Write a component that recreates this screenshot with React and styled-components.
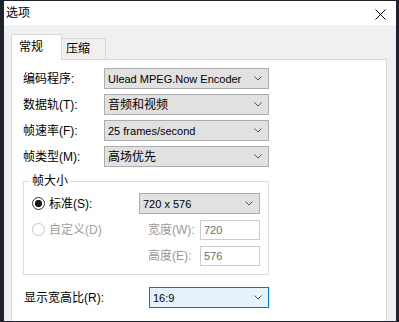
import styled, { createGlobalStyle } from "styled-components";

const GlobalStyle = createGlobalStyle`
  html, body {
    margin: 0;
    padding: 0;
    background: #1d222b;
  }
  body {
    width: 399px;
    height: 322px;
    overflow: hidden;
    font-family: "Liberation Sans", "Noto Sans CJK SC", sans-serif;
    color: #000;
  }
`;

const Page = styled.div`
  padding: 1px 0 0 4px;
  height: 321px;
  box-sizing: border-box;
`;

const Window = styled.div`
  width: 392px;
  height: 100%;
  display: flex;
  flex-direction: column;
  background: #f0f0f0;
`;

const TitleBar = styled.div`
  height: 24px;
  background: #fff;
  display: flex;
  align-items: center;
  justify-content: space-between;
  padding: 0 6px 0 2px;
`;

const Title = styled.span`
  font-size: 12px;
  line-height: 14px;
`;

const Close = styled.svg`
  width: 11px;
  height: 11px;
  margin-right: 4px;
  margin-top: 2px;
`;

const Body = styled.div`
  flex: 1;
  display: flex;
  flex-direction: column;
  padding: 9px 9px 0 7px;
`;

const TabStrip = styled.div`
  display: flex;
  align-items: flex-end;
  height: 26px;
  margin-bottom: -1px;
  position: relative;
  z-index: 1;
`;

const Tab = styled.div`
  box-sizing: border-box;
  display: flex;
  align-items: center;
  font-size: 12px;
  line-height: 14px;
  border: 1px solid #d9d9d9;
  ${(p) =>
    p.$active
      ? `
    width: 51px;
    height: 26px;
    background: #fff;
    border-bottom: none;
    padding: 0 0 2px 7px;
  `
      : `
    width: 44px;
    height: 22px;
    background: #f0f0f0;
    border-left: none;
    padding: 0 0 0 4px;
  `}
`;

const Panel = styled.div`
  flex: 1;
  width: 376px;
  box-sizing: border-box;
  background: #fff;
  border: 1px solid #d9d9d9;
  border-bottom: none;
  padding: 8px 0 0 11px;
`;

const Fields = styled.div`
  display: flex;
  flex-direction: column;
  gap: 5px;
`;

const Row = styled.div`
  display: flex;
  align-items: center;
  height: 21px;
`;

const Label = styled.span`
  width: ${(p) => p.$w}px;
  flex: none;
  font-size: 12px;
  line-height: 14px;
  padding-left: ${(p) => p.$indent || 0}px;
  box-sizing: border-box;
`;

const Combo = styled.div`
  width: ${(p) => p.$w}px;
  height: 21px;
  box-sizing: border-box;
  display: flex;
  align-items: center;
  justify-content: space-between;
  padding: 0 6px 0 3px;
  background: ${(p) => (p.$focused ? "#e5f1fb" : "#e1e1e1")};
  border: 1px solid ${(p) => (p.$focused ? "#0078d7" : "#adadad")};
  font-size: ${(p) => (p.$cjk ? 12 : 11)}px;
  line-height: 14px;
`;

const Chevron = () => (
  <svg width="8" height="5" viewBox="0 0 8 5">
    <path d="M0.5 0.5 L4 4 L7.5 0.5" fill="none" stroke="#555" strokeWidth="1" />
  </svg>
);

const Group = styled.fieldset`
  width: 246px;
  box-sizing: border-box;
  margin: 7px 0 0 0;
  padding: 5px 8px 8px 8px;
  border: 1px solid #dcdcdc;
  display: flex;
  flex-direction: column;
  gap: 5px;
`;

const Legend = styled.legend`
  font-size: 12px;
  line-height: 14px;
  padding: 0 2px;
  margin-left: -2px;
`;

const RadioLabel = styled.label`
  width: 107px;
  flex: none;
  display: flex;
  align-items: center;
  gap: 4px;
  font-size: 12px;
  line-height: 14px;
  color: ${(p) => (p.$disabled ? "#a0a0a0" : "#000")};
`;

const RadioDot = styled.span`
  width: 13px;
  height: 13px;
  box-sizing: border-box;
  border-radius: 50%;
  border: 1px solid ${(p) => (p.$disabled ? "#c6c6c6" : "#333")};
  background: ${(p) =>
    p.$checked ? "radial-gradient(circle, #1a1a1a 0 3.4px, #fff 3.9px)" : "#fff"};
`;

const SubLabel = styled.span`
  width: 61px;
  flex: none;
  padding-left: 9px;
  box-sizing: border-box;
  font-size: 12px;
  line-height: 14px;
  color: #999;
`;

const TextBox = styled.div`
  width: 60px;
  height: 20px;
  box-sizing: border-box;
  border: 1px solid #cccccc;
  background: #fff;
  padding-left: 3px;
  display: flex;
  align-items: center;
  font-size: 11px;
  color: #6d6d6d;
`;

const Spacer = styled.span`
  width: ${(p) => p.$w}px;
  flex: none;
`;

const Bottom = styled(Row)`
  margin-top: 12px;
`;

const rows = [
  { label: "编码程序:", value: "Ulead MPEG.Now Encoder" },
  { label: "数据轨(T):", value: "音频和视频", cjk: true },
  { label: "帧速率(F):", value: "25 frames/second" },
  { label: "帧类型(M):", value: "高场优先", cjk: true },
];

export default function App() {
  return (
    <>
      <GlobalStyle />
      <Page>
        <Window>
          <TitleBar>
            <Title>选项</Title>
            <Close viewBox="0 0 11 11">
              <path d="M0.5 0.5 L10.5 10.5 M10.5 0.5 L0.5 10.5" stroke="#000" strokeWidth="1" />
            </Close>
          </TitleBar>
          <Body>
            <TabStrip>
              <Tab $active>常规</Tab>
              <Tab>压缩</Tab>
            </TabStrip>
            <Panel>
              <Fields>
                {rows.map((r) => (
                  <Row key={r.label}>
                    <Label $w={81}>{r.label}</Label>
                    <Combo $w={165} $cjk={r.cjk}>
                      <span>{r.value}</span>
                      <Chevron />
                    </Combo>
                  </Row>
                ))}
              </Fields>

              <Group>
                <Legend>帧大小</Legend>
                <Row>
                  <RadioLabel>
                    <RadioDot $checked />
                    标准(S):
                  </RadioLabel>
                  <Combo $w={121}>
                    <span>720 x 576</span>
                    <Chevron />
                  </Combo>
                </Row>
                <Row>
                  <RadioLabel $disabled>
                    <RadioDot $disabled />
                    自定义(D)
                  </RadioLabel>
                  <SubLabel>宽度(W):</SubLabel>
                  <TextBox>720</TextBox>
                </Row>
                <Row>
                  <Spacer $w={107} />
                  <SubLabel>高度(E):</SubLabel>
                  <TextBox>576</TextBox>
                </Row>
              </Group>

              <Bottom>
                <Label $w={126} $indent={1}>显示宽高比(R):</Label>
                <Combo $w={120} $focused>
                  <span>16:9</span>
                  <Chevron />
                </Combo>
              </Bottom>
            </Panel>
          </Body>
        </Window>
      </Page>
    </>
  );
}
